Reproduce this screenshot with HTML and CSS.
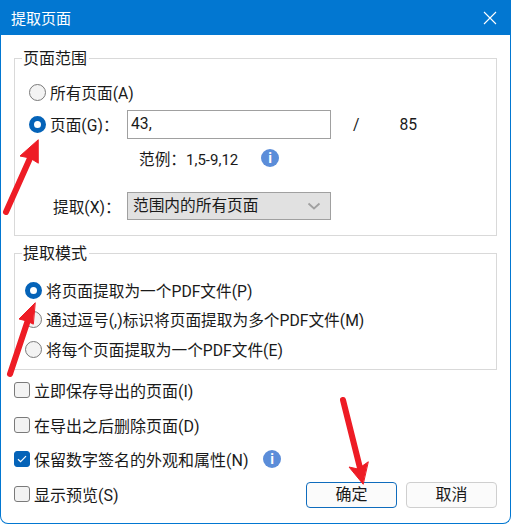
FILE: index.html
```html
<!DOCTYPE html>
<html lang="zh-CN">
<head>
  <meta charset="UTF-8">
  <title>提取页面</title>
  <link rel="stylesheet" href="styles.css">
</head>
<body>

<div class="dialog">
  <div class="titlebar">
    <span>提取页面</span>
    <svg class="close-icon" width="14" height="14" viewBox="0 0 14 14"><path d="M1 1L13 13M13 1L1 13" stroke="#fff" stroke-width="1.1" fill="none"/></svg>
  </div>

  <div class="content">
    <!-- 页面范围 -->
    <div class="group group-range">
      <div class="legend">页面范围</div>
      <div class="row row-all">
        <span class="radio"></span>
        <span>所有页面(A)</span>
      </div>
      <div class="row row-pages">
        <span class="radio checked"></span>
        <span class="label-pages">页面(G)：</span>
        <div class="field">43,</div>
        <span class="slash">/</span>
        <span class="count">85</span>
      </div>
      <div class="row row-hint">
        <span class="hint">范例：<span class="latin">1,5-9,12</span></span>
        <span class="info">i</span>
      </div>
      <div class="row row-extract">
        <span class="label-extract">提取(X)：</span>
        <div class="field select">
          <span>范围内的所有页面</span>
          <svg width="14" height="8" viewBox="0 0 14 8"><path d="M1.5 1.5L7 6.5L12.5 1.5" stroke="#a0a0a0" stroke-width="1.8" fill="none"/></svg>
        </div>
      </div>
    </div>

    <!-- 提取模式 -->
    <div class="group group-mode">
      <div class="legend">提取模式</div>
      <div class="row mode-row">
        <span class="radio checked"></span>
        <span>将页面提取为一个PDF文件(P)</span>
      </div>
      <div class="row mode-row">
        <span class="radio"></span>
        <span>通过逗号(,)标识将页面提取为多个PDF文件(M)</span>
      </div>
      <div class="row mode-row">
        <span class="radio"></span>
        <span>将每个页面提取为一个PDF文件(E)</span>
      </div>
    </div>

    <div class="options">
      <div class="check-row">
        <span class="check"></span>
        <span>立即保存导出的页面(I)</span>
      </div>
      <div class="check-row">
        <span class="check"></span>
        <span>在导出之后删除页面(D)</span>
      </div>
      <div class="check-row">
        <span class="check checked">
          <svg width="12" height="10" viewBox="0 0 12 10"><path d="M2 5.2L4.6 7.6L10 2.2" stroke="#fff" stroke-width="1.2" fill="none"/></svg>
        </span>
        <span class="label-sign">保留数字签名的外观和属性(N)</span>
        <span class="info">i</span>
      </div>
      <div class="check-row last-row">
        <span class="check"></span>
        <span>显示预览(S)</span>
        <div class="buttons">
          <button class="btn primary">确定</button>
          <button class="btn">取消</button>
        </div>
      </div>
    </div>
  </div>

  <!-- 红色箭头 (标注) -->
  <svg class="arrows" width="511" height="524" viewBox="0 0 511 524">
    <g fill="#ee1c25" stroke="#ee1c25" stroke-linecap="round">
      <path d="M6 212L31 156" stroke-width="6" fill="none"/>
      <path d="M38 140L20 156L30 158L38 163Z" stroke-width="1"/>
      <path d="M10 374L28 320" stroke-width="6" fill="none"/>
      <path d="M35 303L19 319L27 321L33 324Z" stroke-width="1"/>
      <path d="M343 400L360 468" stroke-width="6" fill="none"/>
      <path d="M363 484L349 467L358 469L368 462Z" stroke-width="1"/>
    </g>
  </svg>
</div>

</body>
</html>
```

FILE: styles.css
```css
* {
  box-sizing: border-box;
}

body {
  margin: 0;
  padding: 0;
  font-family: Roboto, "Noto Sans CJK SC", sans-serif;
  font-size: 16px;
  color: #1a1a1a;
  background-color: #fff;
}

.dialog {
  position: relative;
  width: 511px;
  height: 524px;
  background-color: #fff;
  border: 1px solid #0277d1;
  border-top: none;
  border-radius: 0 0 8px 8px;
  overflow: hidden;
}

.titlebar {
  height: 35px;
  margin: 0 -1px;
  padding: 0 14px 0 11px;
  background-color: #0277d1;
  color: #fff;
  font-size: 15px;
  display: flex;
  align-items: center;
  justify-content: space-between;
}

.close-icon {
  display: block;
}

.content {
  padding: 23px 13px 0 13px;
}

.group {
  position: relative;
  border: 1px solid #d9d9d9;
}

.group-range {
  height: 178px;
  margin-bottom: 17px;
}

.group-mode {
  height: 117px;
  padding-top: 21px;
}

.legend {
  position: absolute;
  top: -11px;
  left: 7px;
  padding: 0 2px 0 1px;
  line-height: 22px;
  background-color: #fff;
}

.row {
  display: flex;
  align-items: center;
  font-size: 15.7px;
}

.radio {
  flex: none;
  width: 17px;
  height: 17px;
  margin-right: 4px;
  border: 1px solid #7a7a7a;
  border-radius: 50%;
  background-color: #f3f3f3;
}

.radio.checked {
  border: 5px solid #0563b8;
  background-color: #fff;
}

.row-all {
  height: 24px;
  padding-left: 14px;
  margin-top: 21px;
}

.row-pages {
  height: 29px;
  padding-left: 14px;
  margin-top: 6px;
}

.label-pages {
  width: 77px;
}

.field {
  width: 204px;
  height: 29px;
  padding-left: 3px;
  line-height: 26px;
  border: 1px solid #a0a0a0;
  background-color: #fff;
}

.slash {
  margin-left: 22px;
}

.count {
  margin-left: 40px;
}

.row-hint {
  height: 24px;
  margin-top: 7px;
  padding-left: 124px;
}

.latin {
  font-size: 15px;
}

.hint {
  width: 122px;
}

.info {
  flex: none;
  width: 18px;
  height: 18px;
  border-radius: 50%;
  background-color: #5b8dd9;
  color: #fff;
  font-size: 14px;
  font-weight: bold;
  line-height: 18px;
  text-align: center;
}

.row-extract {
  height: 28px;
  margin-top: 22px;
  padding-left: 38px;
}

.label-extract {
  width: 74px;
}

.select {
  height: 28px;
  padding: 0 9px 0 5px;
  background-color: #e1e1e1;
  display: flex;
  align-items: center;
  justify-content: space-between;
}

.mode-row {
  height: 30px;
  padding-left: 10px;
  margin-bottom: -0.5px;
}

.options {
  padding-top: 3px;
}

.check-row {
  display: flex;
  align-items: center;
  height: 34.6px;
}

.check {
  flex: none;
  width: 16px;
  height: 16px;
  margin-right: 4px;
  border: 1px solid #7a7a7a;
  border-radius: 3px;
  background-color: #f3f3f3;
  display: flex;
  align-items: center;
  justify-content: center;
}

.check.checked {
  border-color: #0563b8;
  background-color: #0563b8;
}

.label-sign {
  width: 229px;
  white-space: nowrap;
}

.last-row {
  position: relative;
}

.buttons {
  margin-left: auto;
  margin-top: 2px;
  display: flex;
  gap: 9px;
}

.btn {
  width: 91px;
  height: 26px;
  padding: 0;
  font-family: inherit;
  font-size: 16px;
  line-height: 22px;
  color: #1a1a1a;
  background-color: #fbfbfb;
  border: 1px solid #cfcfcf;
  border-radius: 4px;
}

.btn.primary {
  border-color: #0f6cbd;
}

.arrows {
  position: absolute;
  top: 0;
  left: -1px;
}
```
